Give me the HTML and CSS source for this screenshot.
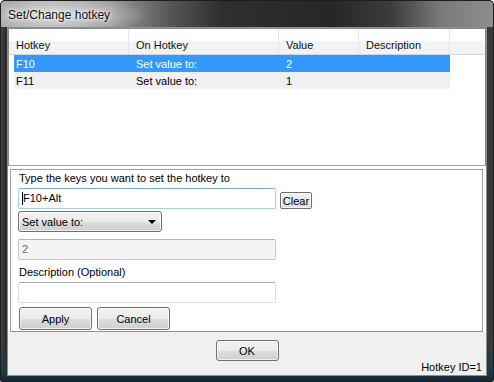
FILE: index.html
```html
<!DOCTYPE html>
<html>
<head>
<meta charset="utf-8">
<link rel="stylesheet" href="styles.css">
</head>
<body>
<div class="window">
  <div class="titlebar"><span class="title">Set/Change hotkey</span></div>
  <div class="client">
    <div class="top">
      <div class="listview">
        <div class="lv-header">
          <div class="hcol c1">Hotkey</div>
          <div class="hcol c2">On Hotkey</div>
          <div class="hcol c3">Value</div>
          <div class="hcol c4">Description</div>
          <div class="hcol c5"></div>
        </div>
        <div class="lv-row selected">
          <div class="cell d1">F10</div>
          <div class="cell d2">Set value to:</div>
          <div class="cell d3">2</div>
          <div class="cell d4"></div>
        </div>
        <div class="lv-row alt">
          <div class="cell d1">F11</div>
          <div class="cell d2">Set value to:</div>
          <div class="cell d3">1</div>
          <div class="cell d4"></div>
        </div>
      </div>
      <div class="group">
        <div class="label">Type the keys you want to set the hotkey to</div>
        <div class="keyrow">
          <div class="textbox focused"><span class="caret"></span>F10+Alt</div>
          <div class="btn clear">Clear</div>
        </div>
        <div class="combo"><span>Set value to:</span><span class="arrow"></span></div>
        <div class="textbox disabled">2</div>
        <div class="label desc-label">Description (Optional)</div>
        <div class="textbox desc"></div>
        <div class="actions">
          <div class="btn action">Apply</div>
          <div class="btn action">Cancel</div>
        </div>
      </div>
    </div>
    <div class="footer">
      <div class="btn ok">OK</div>
      <div class="hotkey-id">Hotkey ID=1</div>
    </div>
  </div>
</div>
</body>
</html>
```

FILE: styles.css
```css
* { box-sizing: border-box; }
html, body { margin: 0; padding: 0; background: #ffffff; }
body {
  width: 494px;
  height: 382px;
  overflow: hidden;
  font-family: "Liberation Sans", Arial, sans-serif;
  font-size: 11px;
  color: #000;
}
.window {
  width: 494px;
  height: 382px;
  padding: 0 8px 9px 8px;
  display: flex;
  flex-direction: column;
  border-radius: 6px 6px 2px 2px;
  box-shadow: inset 0 0 0 1px #1e1e1e;
  background:
    linear-gradient(to bottom, rgba(0,0,0,0) 340px, #1d3a48 372px, #142631 382px),
    linear-gradient(to right, #4a4a4a 0, #2a2a2a 6px, #3a3a3a 100%);
}
.titlebar {
  height: 27px;
  margin: 0 -8px;
  padding: 0 8px;
  flex: none;
  border-radius: 5px 5px 0 0;
  border: 1px solid #1e1e1e;
  border-bottom: none;
  background:
    radial-gradient(ellipse 90px 18px at 60px 14px, rgba(255,255,255,0.55), rgba(255,255,255,0) 100%),
    linear-gradient(to right, #a6a6a6 0, #b4b4b4 50px, #9a9a9a 110px, #555 170px, #2f2f2f 220px, #262626 330px, #3c3c3c 390px, #7a7a7a 440px, #8e8e8e 494px);
  display: flex;
  align-items: center;
}
.title {
  font-size: 12px;
  color: #111;
  text-shadow: 0 0 6px #fff, 0 0 3px #fff;
  padding-top: 1px;
  margin-left: -1px;
}
.client {
  flex: 1;
  display: flex;
  flex-direction: column;
  background: #f0f0f0;
  box-shadow: 0 0 0 1px #8d8d8d;
  margin-top: 1px;
}
.top {
  background: #fff;
  display: flex;
  flex-direction: column;
}
.listview {
  height: 138px;
  border: 1px solid #8a8a8a;
  border-bottom-color: #a0a0a0;
  background: #fff;
}
.lv-header {
  display: flex;
  height: 26px;
  border-bottom: 1px solid #d5d5d5;
  background: linear-gradient(to bottom, #ffffff 0, #ffffff 50%, #f3f4f6 50%, #f1f2f4 100%);
}
.hcol {
  padding: 10px 0 0 7px;
  border-right: 1px solid #e3e6ea;
  white-space: nowrap;
  color: #111;
}
.hcol.c1 { width: 120px; }
.hcol.c2 { width: 150px; }
.hcol.c3 { width: 80px; }
.hcol.c4 { width: 91px; }
.hcol.c5 { flex: 1; border-right: none; }
.lv-row {
  display: flex;
  height: 17px;
  margin-left: 5px;
  width: 436px;
  align-items: center;
}
.lv-row.selected { background: #3399ff; color: #fff; }
.lv-row.alt { background: #f0f0f0; }
.cell { white-space: nowrap; padding-top: 1px; }
.cell.d1 { width: 115px; padding-left: 2px; }
.cell.d2 { width: 150px; padding-left: 7px; }
.cell.d3 { width: 80px; padding-left: 7px; }
.cell.d4 { width: 91px; }
.group {
  margin: 3px 3px 0 2px;
  height: 163px;
  border: 1px solid #a0a0a0;
  border-bottom-color: #8f8f8f;
  background: #fff;
  padding: 2px 0 0 7px;
  display: flex;
  flex-direction: column;
  align-items: flex-start;
}
.label {
  height: 13px;
  line-height: 13px;
  padding-left: 1px;
}
.keyrow {
  margin-top: 3px;
  display: flex;
  align-items: flex-end;
  gap: 4px;
}
.textbox {
  width: 258px;
  height: 21px;
  border: 1px solid #d5dde5;
  border-top-color: #abadb3;
  border-radius: 2px;
  background: #fff;
  padding: 3px 0 0 3px;
  line-height: 13px;
}
.textbox.focused {
  border-color: #a9cbe6;
  border-top-color: #7aa8d0;
  display: flex;
  align-items: flex-start;
}
.caret {
  display: inline-block;
  width: 1px;
  height: 13px;
  background: #000;
}
.textbox.disabled {
  margin-top: 7px;
  background: #f4f4f4;
  border-color: #c8c8c8;
  border-top-color: #adb2b5;
  color: #6d6d6d;
}
.desc-label { margin-top: 6px; }
.textbox.desc { margin-top: 3px; }
.btn {
  border: 1px solid #707070;
  border-radius: 3px;
  background: linear-gradient(to bottom, #f2f2f2 0, #ebebeb 50%, #dddddd 50%, #cfcfcf 100%);
  box-shadow: inset 0 0 0 1px rgba(255,255,255,0.7);
  display: flex;
  align-items: center;
  justify-content: center;
  color: #000;
}
.btn.clear {
  width: 32px;
  height: 17px;
  font-size: 11px;
  padding: 0;
  border-radius: 2px;
  background: linear-gradient(to bottom, #f4f4f4, #dcdcdc);
}
.combo {
  margin-top: 2px;
  width: 144px;
  height: 21px;
  border: 1px solid #707070;
  border-radius: 3px;
  background: linear-gradient(to bottom, #f2f2f2 0, #ebebeb 50%, #dddddd 50%, #cfcfcf 100%);
  box-shadow: inset 0 0 0 1px rgba(255,255,255,0.7);
  display: flex;
  align-items: center;
  justify-content: space-between;
  padding: 0 5px 0 3px;
}
.arrow {
  width: 0;
  height: 0;
  border-left: 4px solid transparent;
  border-right: 4px solid transparent;
  border-top: 4px solid #000;
}
.actions {
  margin-top: 4px;
  margin-left: 1px;
  display: flex;
  gap: 5px;
}
.btn.action { width: 73px; height: 23px; }
.footer {
  flex: 1;
  display: grid;
  grid-template-rows: 21px 1fr;
  justify-items: center;
  padding-top: 8px;
  background: #f0f0f0;
}
.btn.ok { width: 63px; height: 21px; }
.hotkey-id {
  justify-self: end;
  align-self: end;
  padding-right: 4px;
  line-height: 12px;
  padding-bottom: 2px;
}
```
